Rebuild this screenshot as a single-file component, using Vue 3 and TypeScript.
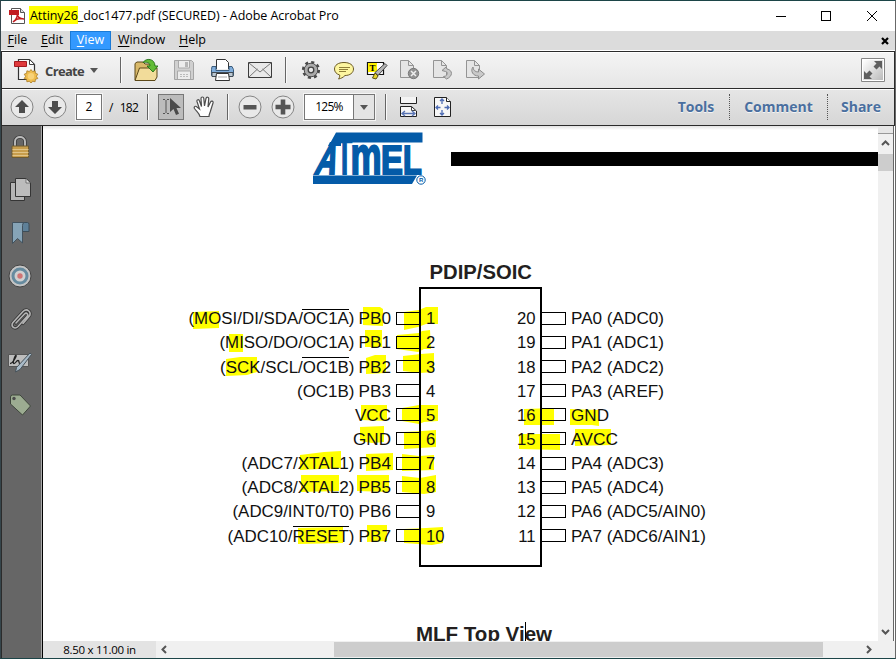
<script setup lang="ts">
interface Pin {
  y: number
  base: number
  num: number
  name: string
  nameX: number
  fn?: string
  fnX?: number
}
interface RightPin {
  y: number
  base: number
  num: number
  label: string
  end: number
}

const menus: { key: string; rest: string; active?: boolean }[] = [
  { key: 'F', rest: 'ile' },
  { key: 'E', rest: 'dit' },
  { key: 'V', rest: 'iew', active: true },
  { key: 'W', rest: 'indow' },
  { key: 'H', rest: 'elp' },
]

const leftPins: Pin[] = [
  { y: 312, base: 324, num: 1, name: 'PB0', nameX: 358.5, fn: '(MOSI/DI/SDA/OC1A)', fnX: 188.5 },
  { y: 336, base: 348, num: 2, name: 'PB1', nameX: 358.5, fn: '(MISO/DO/OC1A)', fnX: 219.5 },
  { y: 360, base: 373, num: 3, name: 'PB2', nameX: 358.5, fn: '(SCK/SCL/OC1B)', fnX: 220 },
  { y: 384, base: 397, num: 4, name: 'PB3', nameX: 358.5, fn: '(OC1B)', fnX: 297 },
  { y: 408, base: 421, num: 5, name: 'VCC', nameX: 355 },
  { y: 432, base: 445, num: 6, name: 'GND', nameX: 353 },
  { y: 457, base: 469, num: 7, name: 'PB4', nameX: 358.5, fn: '(ADC7/XTAL1)', fnX: 241.5 },
  { y: 481, base: 493, num: 8, name: 'PB5', nameX: 358.5, fn: '(ADC8/XTAL2)', fnX: 241.5 },
  { y: 505, base: 517, num: 9, name: 'PB6', nameX: 358.5, fn: '(ADC9/INT0/T0)', fnX: 232.5 },
  { y: 529, base: 542, num: 10, name: 'PB7', nameX: 358.5, fn: '(ADC10/RESET)', fnX: 227.5 },
]

const rightPins: RightPin[] = [
  { y: 312, base: 324, num: 20, label: 'PA0 (ADC0)', end: 664 },
  { y: 336, base: 348, num: 19, label: 'PA1 (ADC1)', end: 664 },
  { y: 360, base: 373, num: 18, label: 'PA2 (ADC2)', end: 664 },
  { y: 384, base: 397, num: 17, label: 'PA3 (AREF)', end: 664 },
  { y: 408, base: 421, num: 16, label: 'GND', end: 609 },
  { y: 432, base: 445, num: 15, label: 'AVCC', end: 618 },
  { y: 457, base: 469, num: 14, label: 'PA4 (ADC3)', end: 664 },
  { y: 481, base: 493, num: 13, label: 'PA5 (ADC4)', end: 664 },
  { y: 505, base: 517, num: 12, label: 'PA6 (ADC5/AIN0)', end: 706 },
  { y: 529, base: 542, num: 11, label: 'PA7 (ADC6/AIN1)', end: 706 },
]

const marks: string[] = [
  '193,312 219,311 219,328 193,329',
  '363,307 380,307 383,309 383,326 363,325',
  '404,312 419,310 426,307 438,307 438,324 426,324 418,327 404,330',
  '229,334 243,334 243,352 229,352',
  '365,330 382,330 382,347 365,347',
  '397,335 419,333 422,331 430,330 431,349 424,349 418,352 397,349',
  '226,359 240,357 257,357 257,372 247,375 226,376',
  '366,358 375,355 386,355 386,373 366,374',
  '403,356 421,354 434,353 434,372 420,373 403,371',
  '361,405 387,405 387,421 361,420',
  '402,408 419,405 438,405 438,421 424,422 419,424 402,421',
  '360,427 384,426 384,442 372,443 360,441',
  '404,432 422,431 436,430 436,447 404,449',
  '300,455 324,452 341,451 341,468 300,470',
  '366,454 393,453 393,470 366,471',
  '402,454 419,456 434,455 434,470 402,471',
  '301,475 339,475 339,491 301,492',
  '357,475 389,475 389,492 357,491',
  '402,476 420,478 436,475 436,492 424,494 402,492',
  '298,528 343,527 343,543 298,544',
  '367,525 387,525 387,541 367,542',
  '404,529 426,528 443,527 443,543 432,545 404,543',
  '524,409 554,408 554,425 524,425',
  '570,409 599,410 599,426 592,425 570,425',
  '519,434 560,434 560,450 519,449',
  '575,429 611,429 611,445 575,446',
]

const overlines: [number, number, number][] = [
  [302, 349, 309.5],
  [302, 349, 357.5],
  [293, 349, 526.5],
]
</script>

<template>
  <div class="window">
    <header class="titlebar">
      <svg class="app-icon" width="17" height="17" viewBox="0 0 17 17">
        <path d="M2.5.5h9l4 4v11h-13z" fill="#fff" stroke="#555" />
        <path d="M11.500.5v4h4" fill="#ddd" stroke="#555" />
        <path d="M0 2h10v5H0z" fill="#c11b20" />
        <path d="M4 14c3-2 5-6 4-10 0 5 3 7 7 7-4-1-8 0-11 3z" fill="none" stroke="#c11b20" stroke-width="1.500" />
      </svg>
      <h1 class="title"><mark>Attiny26</mark>_doc1477.pdf (SECURED) - Adobe Acrobat Pro</h1>
      <svg class="controls" width="105" height="14" viewBox="0 0 105 14" fill="none" stroke="#000" shape-rendering="crispEdges">
        <path d="M0 7.500h10M45.500 2.500h9v9h-9z" />
        <path d="M91 2l10 10M101 2l-10 10" shape-rendering="auto" />
      </svg>
    </header>

    <nav class="menubar">
      <span v-for="m in menus" :key="m.key" class="menu" :class="[{ active: m.active }, 'menu-' + m.key]"><u>{{ m.key }}</u>{{ m.rest }}</span>
      <svg class="close-doc" width="8" height="8" viewBox="0 0 8 8" stroke="#000" stroke-width="2.200"><path d="M1 1l6 6M7 1L1 7" /></svg>
    </nav>

    <div class="toolbar primary">
      <svg class="create-icon" width="25" height="26" viewBox="0 0 25 26">
        <path d="M4.500 2.500h11l5 5v15h-16z" fill="#f7f7f7" stroke="#333" stroke-width="1.200" />
        <path d="M15.500 2.500v5h5z" fill="#fff" stroke="#444" />
        <path d="M.5 4.500h12v5H.5z" fill="#e0393c" stroke="#a31b20" />
        <path d="M17 12.500l1.600 2 2.500-.7.3 2.500 2.400.9-1.400 2.100 1.400 2.200-2.400.8-.3 2.500-2.500-.6-1.600 2-1.600-2-2.500.6-.3-2.500-2.400-.8 1.400-2.200-1.400-2.100 2.400-.9.300-2.500 2.500.7z" fill="#efbd4d" stroke="#a97a22" stroke-width=".8" />
        <circle cx="17" cy="19.200" r="3.200" fill="#f8d277" />
      </svg>
      <span class="create">Create</span>
      <i class="caret"></i>
      <i class="sep first"></i>
      <div class="icons wide">
        <svg viewBox="0 0 24 24">
          <path d="M1 22V5.500L3 4h6l2 2h9v5" fill="#d9b96a" stroke="#5c4818" />
          <path d="M1 22.500L5.500 10H23v9l-2 3.500z" fill="#f2dc9a" stroke="#5c4818" />
          <path d="M9 4.500c3-5 12-4 12 3.500h3l-5 6-6-6h3c0-4-4-4-7-3.500z" fill="#62bc36" stroke="#226f16" stroke-width=".9" />
        </svg>
        <svg viewBox="0 0 24 24">
          <path d="M2.500 2.500h17l2 2v17h-19z" fill="#d0d0d0" stroke="#a5a5a5" />
          <path d="M6.500 3v7h11V3M5.500 21v-8h13v8" fill="#ececec" stroke="#aaa" />
          <path d="M13 4h3v5h-3z" fill="#b6b6b6" /><path d="M8 16.500h8M8 18.500h8" stroke="#bbb" stroke-dasharray="2 1" />
        </svg>
        <svg viewBox="0 0 24 24">
          <path d="M6.500 11V1.500h9l3 3V11" fill="#fff" stroke="#333" />
          <path d="M2 8.500h4v4h13v-4h3l1.500 3v6h-22v-6z" fill="#80addb" stroke="#3b5c7c" />
          <path d="M2 14.500h21v4H2z" fill="#bcc8d2" stroke="#424c55" />
          <path d="M6.500 15.500h12l1 7h-14z" fill="#fff" stroke="#333" /><path d="M8 19h9" stroke="#aaa" />
        </svg>
        <svg viewBox="0 0 24 24">
          <path d="M.5 4.500h23v15H.5z" fill="#e9e9e9" stroke="#3b3b3b" />
          <path d="M1 19l8.500-8M23 19l-8.500-8M1 5l11 9L23 5" fill="none" stroke="#777" />
        </svg>
      </div>
      <i class="sep second"></i>
      <div class="icons narrow">
        <svg viewBox="0 0 24 24">
          <circle cx="12" cy="12" r="7.800" fill="none" stroke="#4a4a4a" stroke-width="2.600" stroke-dasharray="3.060 3.060" />
          <circle cx="12" cy="12" r="6.800" fill="#ababab" stroke="#4a4a4a" />
          <circle cx="12" cy="12" r="2.800" fill="#e8e8e8" stroke="#444" stroke-width="1.300" />
        </svg>
        <svg viewBox="0 0 24 24">
          <path d="M12 4.500c6 0 9.500 2.800 9.500 6.500S18 17.500 13 17.500c-2 2-4 3-6.500 3.500 1-1.200 1.300-2.400 1.200-4C4.500 16 2.500 14 2.500 11 2.500 7.300 6 4.500 12 4.500z" fill="#fdf6a0" stroke="#6b5a26" />
          <path d="M7 9.500h11M7 11.500h9M7 13.500h7" stroke="#91803a" />
        </svg>
        <svg viewBox="0 0 24 24">
          <path d="M2.500 4.500h16v12h-16z" fill="#fff" stroke="#111" stroke-width="1.200" />
          <path d="M3 5h9v9H3z" fill="#fff200" />
          <text x="4.500" y="13" class="tee">T</text>
          <path d="M20 5.500l2 2-9 10-3-3z" fill="#b5b5b5" stroke="#444" />
          <path d="M10 15l3 3-2 3-3.500-1z" fill="#e5d22b" stroke="#595013" />
        </svg>
        <svg viewBox="0 0 24 24">
          <path d="M2.500 2.500h8l5 5v12h-13z" fill="#e5e5e5" stroke="#949494" /><path d="M10.500 2.500v5h5" fill="none" stroke="#949494" />
          <circle cx="15.500" cy="15.500" r="5.200" fill="#929292" stroke="#7a7a7a" /><path d="M13 13l5 5M18 13l-5 5" stroke="#eee" stroke-width="1.500" />
        </svg>
        <svg viewBox="0 0 24 24">
          <path d="M2.500 2.500h8l5 5v12h-13z" fill="#e5e5e5" stroke="#949494" /><path d="M10.500 2.500v5h5" fill="none" stroke="#949494" />
          <path d="M11 12.500l4-3.500 1 2c6 1 6 7.500-.5 10l-3-2.500c4 0 5-4.500 2-5z" fill="#c9c9c9" stroke="#8c8c8c" />
        </svg>
        <svg viewBox="0 0 24 24">
          <path d="M2.500 2.500h8l5 5v12h-13z" fill="#e5e5e5" stroke="#949494" /><path d="M10.500 2.500v5h5" fill="none" stroke="#949494" />
          <path d="M9 9c0 3 2 5 5.500 5v-3l6 5-6 5v-3C9 18 6 13 9 9z" fill="#c9c9c9" stroke="#8c8c8c" />
        </svg>
      </div>
      <svg class="expand" width="24" height="24" viewBox="0 0 24 24">
        <defs><linearGradient id="eg" x2="1" y2="1"><stop stop-color="#fff" /><stop offset="1" stop-color="#bbb" /></linearGradient></defs>
        <path d="M.5.5h23v23H.5z" fill="#fff" stroke="#868686" /><path d="M2 2h20v20H2z" fill="url(#eg)" />
        <path d="M13 3h8v8l-2.500-2.500-3 3-3-3 3-3zM3 13l2.500 2.500 3-3 3 3-3 3L11 21H3z" fill="#5e5e5e" />
      </svg>
    </div>

    <div class="toolbar secondary">
      <svg class="round" viewBox="0 0 24 24"><circle cx="12" cy="12" r="11" fill="#e9e9e9" stroke="#858585" /><path d="M12 5l7 7h-4v6H9v-6H5z" fill="#4c4c4c" /></svg>
      <svg class="round down" viewBox="0 0 24 24"><circle cx="12" cy="12" r="11" fill="#e9e9e9" stroke="#858585" /><path d="M12 19l7-7h-4V6H9v6H5z" fill="#4c4c4c" /></svg>
      <span class="page-box">2</span>
      <span class="page-total"><b>/</b>182</span>
      <i class="sep a"></i>
      <div class="select-tool">
        <svg width="24" height="24" viewBox="0 0 24 24">
          <path d="M4 4.500h2M8 4.500h2M7 5v13M4 18.500h2M8 18.500h2" stroke="#555" fill="none" />
          <path d="M11 3v14l3.500-3 2.500 6 3-1.300-2.500-5.700H22z" fill="#4a4a4a" />
        </svg>
      </div>
      <svg class="hand" width="22" height="24" viewBox="0 0 22 24">
        <path d="M7 21.500c-.5-3-3.500-5-5.500-8-1-2 1-3 2.500-1.500L6.500 14 4 6.500C3.500 4.500 6 4 6.500 6l2 5.500L8 3.500c0-2 2.700-2 2.800 0l.7 7.500L13 3.500c.5-2 3-1.500 2.700.5L15 12l2.500-5c1-1.800 3-.8 2.500 1l-2.500 8c-.4 2-1.500 3-1.500 5.500z" fill="#fff" stroke="#4e4e4e" stroke-width="1.200" />
      </svg>
      <i class="sep b"></i>
      <svg class="round" viewBox="0 0 24 24"><circle cx="12" cy="12" r="11" fill="#e9e9e9" stroke="#858585" /><path d="M5.500 10h13v4.500h-13z" fill="#555" /></svg>
      <svg class="round plus" viewBox="0 0 24 24"><circle cx="12" cy="12" r="11" fill="#e9e9e9" stroke="#858585" /><path d="M4.500 9.700h5.200V4.500h4.600v5.200h5.200v4.600h-5.200v5.200H9.700v-5.200H4.500z" fill="#555" /></svg>
      <div class="zoom"><span>125%</span><em><i class="caret"></i></em></div>
      <i class="sep c"></i>
      <svg class="fit" width="18" height="22" viewBox="0 0 18 22">
        <path d="M.5 1v6.500h16V1" fill="#f4f4f4" stroke="#222" /><path d="M.5 20.500v-10h11l5 4.500v5.500z" fill="#f7f7f7" stroke="#222" />
        <path d="M11.500 10.500v4h4" fill="none" stroke="#444" /><path d="M2 17.500h13M5 15l-3 2.500L5 20M12 15l3 2.500-3 2.500" fill="none" stroke="#5a75b4" stroke-width="1.300" />
      </svg>
      <svg class="fit second" width="18" height="22" viewBox="0 0 18 22">
        <path d="M.5 1.500h12l4 4v15H.5z" fill="#f7f7f7" stroke="#222" /><path d="M12.500 1.500v4h4" fill="#fff" stroke="#222" />
        <path d="M8 3v5M8 14v5M2 11.500h4.500M10.500 11.500H15M6 5l2-2 2 2M6 17l2 2 2-2M4 9.500l-2 2 2 2M13 9.500l2 2-2 2" fill="none" stroke="#4e6cb4" stroke-width="1.300" />
      </svg>
      <div class="panels"><span class="tools">Tools</span><span class="comment">Comment</span><span class="share">Share</span></div>
    </div>

    <main class="body">
      <aside class="side">
        <svg viewBox="0 0 24 24"><path d="M7 12V6.500c0-6 10-6 10 0V12" fill="none" stroke="#3d3d3d" stroke-width="3.600" /><path d="M7 12V6.500c0-6 10-6 10 0V12" fill="none" stroke="#bcbcbc" stroke-width="1.900" /><path d="M4 11h16.500v11.500H4z" fill="#c79d4c" stroke="#6d5a32" /><path d="M4.500 14.500h16M4.500 17.500h16M4.500 20.500h16" stroke="#e0c488" /></svg>
        <svg viewBox="0 0 24 24"><path d="M2.500 4.500h14v18h-14z" fill="#b5b5b5" stroke="#353535" /><path d="M7.500.5h11l4 4v14h-15z" fill="#bcbcbc" stroke="#353535" /><path d="M18 .5v4.500h4.500z" fill="#ddd" stroke="#555" stroke-width=".7" /></svg>
        <svg viewBox="0 0 24 24"><path d="M13 1.500h6.500q1.500 0 1.500 2v7h-6" fill="#5e8098" stroke="#3c4d58" /><path d="M4.500 1.500h12q-2 0-2 3v17.500l-5-4.500-5 5z" fill="#86a4b7" stroke="#42525e" /></svg>
        <svg viewBox="0 0 24 24"><circle cx="12" cy="12" r="11" fill="#c4c4c4" stroke="#444" /><circle cx="12" cy="12" r="7" fill="#d0d0d0" stroke="#668b9f" stroke-width="3" /><circle cx="12" cy="12" r="2.700" fill="#cf7474" /></svg>
        <svg viewBox="0 0 24 24"><g fill="none" stroke-linecap="round"><path d="M8 16l8.500-9c2-2 4.500.5 2.500 2.500l-9 10c-3.500 3.500-8-.5-5-4L15 4.500c4-4 9.500 1 6 5l-6 7" stroke="#373737" stroke-width="3.200" /><path d="M8 16l8.500-9c2-2 4.500.5 2.500 2.500l-9 10c-3.500 3.500-8-.5-5-4L15 4.500c4-4 9.500 1 6 5l-6 7" stroke="#b4b4b4" stroke-width="1.600" /></g></svg>
        <svg viewBox="0 0 24 24"><path d="M.5 4.500h20v12H.5z" fill="#bdbdbd" stroke="#555" /><path d="M2 13.500c3 0 7-8 6-8s-4 8-2 8 2-3 4-3 0 3 2 3" fill="none" stroke="#222" stroke-width="1.300" /><path d="M22 3l1.500 1.500L12 19.500 7.500 22l1-4.500z" fill="#a8bac8" stroke="#46525a" /></svg>
        <svg viewBox="0 0 24 24"><path d="M2.500 4q0-2 2-2H12l10.500 11-8 9L2.500 11z" fill="#9cac91" stroke="#3e463b" /><circle cx="6" cy="5.500" r="1.700" fill="#4b4b4b" /></svg>
      </aside>

      <section class="doc">
        <div class="upper">
          <svg class="page" width="835" height="515" viewBox="43 126 835 515">
            <g class="logo">
              <path d="M336 132.500h86.500v10h-92zM313 175.500h104l-5 8.500h-99z" />
              <path d="M330 142h11v4h-13z" />
              <text transform="translate(313.500 173.500) skewX(-16) scale(.7 1)" x="0" y="0" font-size="42">A</text>
              <text transform="translate(337 173.500) scale(.45 1)" x="0" y="0" font-size="55">T</text>
              <text transform="translate(350.500 173.500) scale(.66 1)" x="0" y="0" font-size="53">m</text>
              <text transform="translate(381 173.500) scale(.79 1)" x="0" y="0" font-size="41.500">E</text>
              <text transform="translate(403 173.500) scale(.74 1)" x="0" y="0" font-size="41.500">L</text>
              <circle cx="421" cy="180" r="4.200" fill="none" />
              <text x="418.900" y="182.300" font-size="6" class="reg">R</text>
            </g>
            <path d="M451 152h427v14H451z" />

            <g class="marks"><polygon v-for="m in marks" :key="m" :points="m" /></g>

            <text x="429.500" y="278.500" class="heading" textLength="102.500" lengthAdjust="spacingAndGlyphs">PDIP/SOIC</text>
            <g class="outline">
              <rect x="420" y="288" width="121" height="278" stroke-width="2" />
              <rect v-for="p in leftPins" :key="p.num" x="396.500" :y="p.y + 0.500" width="23" height="12" />
              <rect v-for="p in rightPins" :key="p.num" x="541.500" :y="p.y + 0.500" width="24" height="12" />
              <line v-for="o in overlines" :key="o[2]" :x1="o[0]" :x2="o[1]" :y1="o[2]" :y2="o[2]" />
            </g>
            <g class="labels">
              <template v-for="p in leftPins" :key="p.num">
                <text v-if="p.fn" :x="p.fnX" :y="p.base" :textLength="354.500 - (p.fnX ?? 0)" lengthAdjust="spacingAndGlyphs">{{ p.fn }}</text>
                <text :x="p.nameX" :y="p.base" :textLength="391 - p.nameX" lengthAdjust="spacingAndGlyphs">{{ p.name }}</text>
                <text x="426" :y="p.base">{{ p.num }}</text>
              </template>
              <template v-for="p in rightPins" :key="p.num">
                <text x="535.500" :y="p.base" text-anchor="end">{{ p.num }}</text>
                <text x="571" :y="p.base" :textLength="p.end - 571" lengthAdjust="spacingAndGlyphs">{{ p.label }}</text>
              </template>
            </g>
            <text x="416" y="640.500" class="heading" textLength="136" lengthAdjust="spacingAndGlyphs">MLF Top View</text>
            <path d="M525 622h1v19h-1z" />
          </svg>
          <div class="vscroll">
            <i class="split"></i>
            <svg class="arrow up" width="9" height="8" viewBox="0 0 9 8"><path d="M1 6l3.500-3.500L8 6" /></svg>
            <i class="thumb"></i>
            <svg class="arrow dn" width="9" height="8" viewBox="0 0 9 8"><path d="M1 2l3.500 3.500L8 2" /></svg>
          </div>
        </div>
        <footer class="lower">
          <span class="size">8.50 x 11.00 in</span>
          <div class="hscroll">
            <svg class="arrow" width="8" height="9" viewBox="0 0 8 9"><path d="M6 1L2.500 4.500 6 8" /></svg>
            <i class="thumb"></i>
            <svg class="arrow right" width="8" height="9" viewBox="0 0 8 9"><path d="M2 1l3.500 3.500L2 8" /></svg>
          </div>
        </footer>
      </section>
    </main>
  </div>
</template>

<style>
body { margin: 0; overflow: hidden; }
</style>

<style scoped>
* { box-sizing: border-box; }
.window {
  width: 896px; height: 659px; display: flex; flex-direction: column;
  border: 1px solid #1c4548; border-left-color: #35454b; border-right-color: #686868;
  background: #fff; font-family: "Open Sans", "Noto Sans", sans-serif; color: #000; overflow: hidden;
}
svg { display: block; flex: none; }
.titlebar { height: 30px; flex: none; display: flex; align-items: center; padding: 0 14px 0 8px; }
.title { margin: -1px 0 0 3px; font-size: 12.500px; font-weight: 400; letter-spacing: -.06px; white-space: nowrap; line-height: 17px; }
.title mark { background: #ff0; color: inherit; padding: 1px 0 0 1px; }
.controls { margin-left: auto; }
.menubar { height: 19px; flex: none; display: flex; align-items: stretch; background: #dcdcdc; font-size: 12.500px; line-height: 18px; padding: 0 6px 0 0; }
.menu { white-space: nowrap; text-align: center; }
.menu u { text-underline-offset: 2px; }
.menu.active { background: #3399ff; color: #fff; box-shadow: inset 0 0 0 1px #1a7ad6; }
.menu-F { width: 33px; }
.menu-E { width: 36px; }
.menu-V { width: 41px; }
.menu-W { width: 61px; }
.menu-H { width: 41px; }
.close-doc { margin: 6px 0 0 auto; }
.toolbar { flex: none; display: flex; align-items: center; border: 1px solid #2b2b2b; border-width: 1px 1px 0 1px; box-shadow: inset 0 1px #fff; }
.primary { height: 37px; margin-top: 1px; background: linear-gradient(#f4f4f4, #e6e6e6); padding: 0 9px 0 12px; }
.secondary { height: 37px; background: linear-gradient(#e6e6e6, #d6d6d6); padding-left: 8px; }
.create { width: 39px; margin: 1px 0 0 6px; font-size: 13px; font-weight: 700; letter-spacing: -.65px; color: #444; white-space: nowrap; }
.caret { width: 0; height: 0; border: 4px solid transparent; border-top: 5px solid #555; border-bottom: 0; }
.create + .caret { margin-left: 6px; margin-right: 1px; }
.sep { width: 1px; height: 26px; background: #666; box-shadow: 1px 0 #fafafa; flex: none; }
.sep.first { margin: 0 13px 0 21px; }
.sep.second { margin: 0 13px; }
.icons { display: flex; }
.icons svg { width: 24px; height: 24px; }
.wide { gap: 14px; }
.narrow { gap: 9px; }
.tee { font: bold 9px "Liberation Serif", serif; }
.expand { margin-left: auto; }
.round { width: 24px; height: 24px; }
.down { margin-left: 9px; }
.plus { margin-left: 9px; }
.page-box { width: 26px; height: 26px; margin-left: 9px; border: 1px solid #777; background: #fff; font-size: 12px; line-height: 24px; text-align: center; box-shadow: 0 0 0 1px #f5f5f5; }
.page-total { width: 31px; margin-left: 7px; font-size: 12px; letter-spacing: -.7px; white-space: nowrap; display: flex; gap: 7px; }
.page-total b { font-weight: 400; }
.sep.a { margin: 0 10px 0 7px; }
.select-tool { width: 26px; height: 26px; border: 1px solid #777; background: #bcbcbc; }
.hand { margin-left: 9px; }
.sep.b { margin: 0 10px 0 12px; }
.zoom { width: 71px; height: 26px; margin-left: 9px; display: flex; border: 1px solid #777; background: #fff; font-size: 12px; line-height: 24px; box-shadow: 0 0 0 1px #f5f5f5; }
.zoom span { width: 48px; text-align: center; letter-spacing: -.7px; }
.zoom em { flex: 1; display: flex; align-items: center; justify-content: center; background: #e4e4e4; border-left: 1px solid #777; }
.sep.c { margin: 0 14px 0 10px; }
.fit.second { margin-left: 16px; }
.panels { margin-left: auto; display: flex; align-items: center; color: #4a6f9f; font-size: 14px; font-weight: 700; white-space: nowrap; line-height: 26px; text-shadow: 0 1px #f4f4f4; }
.panels span { text-align: center; }
.tools { width: 66px; }
.comment { width: 99px; border-left: 1px dotted #555; border-right: 1px dotted #555; }
.share { width: 66px; }
.body { flex: 1; display: flex; min-height: 0; border: solid #2b2b2b; border-width: 1px 0 0 1px; }
.side { width: 41px; background: #666; border-right: 1px solid #000; box-shadow: inset -1px 0 #aaa; display: flex; flex-direction: column; gap: 19px; padding: 9px 0 0 6px; }
.side svg { width: 24px; height: 24px; }
.doc { flex: 1; display: flex; flex-direction: column; min-width: 0; }
.upper { height: 515px; display: flex; }
.page { background: linear-gradient(#e2e2e2, #fff 4px); }
.labels { font: 16.700px "Liberation Sans", Arial, sans-serif; fill: #111; }
.heading { font: bold 20.500px "Liberation Sans", Arial, sans-serif; fill: #231f20; }
.marks { fill: #ff0; }
.outline { fill: none; stroke: #000; shape-rendering: crispEdges; }
.logo { fill: #045ba8; font-family: "Liberation Sans", Arial, sans-serif; font-weight: 700; stroke: #045ba8; stroke-width: 0; }
.logo text { stroke-width: 2px; }
.logo .reg { stroke-width: 0; }
.logo circle { stroke-width: 1px; }
.vscroll { width: 16px; background: #f0f0f0; border-right: 1px solid #666; display: flex; flex-direction: column; align-items: center; }
.split { width: 100%; height: 8px; background: #e6e6e6; border-bottom: 1px solid #999; }
.arrow path { fill: none; stroke: #555; stroke-width: 2; }
.up { margin-top: 5px; }
.vscroll .thumb { width: 15px; height: 17px; margin-top: 7px; background: #cdcdcd; }
.dn { margin: auto 0 5px; }
.lower { flex: 1; display: flex; background: #f0f0f0; }
.size { width: 113px; background: #e3e3e3; font-size: 11.500px; line-height: 17px; text-align: center; white-space: nowrap; letter-spacing: -.3px; }
.hscroll { flex: 1; display: flex; align-items: center; padding: 0 22px 0 4px; }
.hscroll .thumb { width: 489px; height: 15px; margin-left: 166px; background: #cdcdcd; }
.right { margin-left: auto; }
</style>
